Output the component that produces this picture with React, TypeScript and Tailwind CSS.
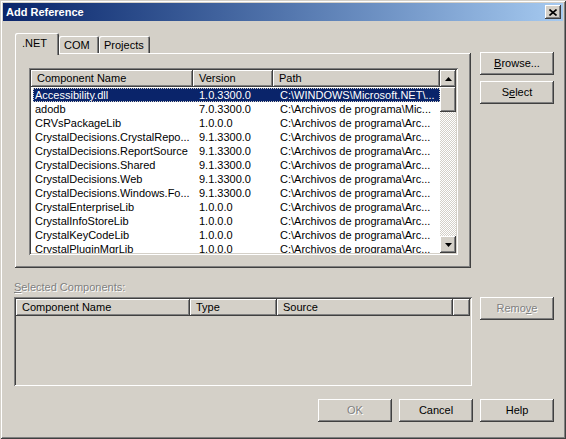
import React from 'react'

const raised = 'shadow-[inset_-1px_-1px_#404040,inset_1px_1px_#ffffff,inset_-2px_-2px_#808080]'
const sunken = 'shadow-[inset_1px_1px_#808080,inset_-1px_-1px_#ffffff,inset_2px_2px_#404040,inset_-2px_-2px_#d4d0c8]'
const disabledText = 'text-[#808080] [text-shadow:1px_1px_0_#ffffff]'

const refs = [
  ['Accessibility.dll', '1.0.3300.0', 'C:\\WINDOWS\\Microsoft.NET\\...'],
  ['adodb', '7.0.3300.0', 'C:\\Archivos de programa\\Mic...'],
  ['CRVsPackageLib', '1.0.0.0', 'C:\\Archivos de programa\\Arc...'],
  ['CrystalDecisions.CrystalRepo...', '9.1.3300.0', 'C:\\Archivos de programa\\Arc...'],
  ['CrystalDecisions.ReportSource', '9.1.3300.0', 'C:\\Archivos de programa\\Arc...'],
  ['CrystalDecisions.Shared', '9.1.3300.0', 'C:\\Archivos de programa\\Arc...'],
  ['CrystalDecisions.Web', '9.1.3300.0', 'C:\\Archivos de programa\\Arc...'],
  ['CrystalDecisions.Windows.Fo...', '9.1.3300.0', 'C:\\Archivos de programa\\Arc...'],
  ['CrystalEnterpriseLib', '1.0.0.0', 'C:\\Archivos de programa\\Arc...'],
  ['CrystalInfoStoreLib', '1.0.0.0', 'C:\\Archivos de programa\\Arc...'],
  ['CrystalKeyCodeLib', '1.0.0.0', 'C:\\Archivos de programa\\Arc...'],
  ['CrystalPluginMgrLib', '1.0.0.0', 'C:\\Archivos de programa\\Arc...'],
]

function Button({ children, disabled, className = '' }: { children: React.ReactNode; disabled?: boolean; className?: string }) {
  return (
    <div className={`w-[74px] h-[23px] flex items-center justify-center bg-[#d4d0c8] ${raised} ${disabled ? disabledText : ''} ${className}`}>
      {children}
    </div>
  )
}

function HeaderCell({ label, w }: { label: string; w: string }) {
  return (
    <div className={`${w} h-[17px] shrink-0 flex items-center pl-[6px] bg-[#d4d0c8] ${raised} whitespace-nowrap overflow-hidden`}>
      {label}
    </div>
  )
}

function Arrow({ up }: { up?: boolean }) {
  return (
    <div className={`w-[16px] h-[17px] flex items-center justify-center bg-[#d4d0c8] ${raised}`}>
      <svg width="7" height="4" viewBox="0 0 7 4">
        {up ? <path d="M3.5 0 L7 4 L0 4 Z" fill="#000" /> : <path d="M0 0 L7 0 L3.5 4 Z" fill="#000" />}
      </svg>
    </div>
  )
}

export default function App() {
  return (
    <div className="w-[566px] h-[439px] bg-[#d4d0c8] p-[3px] flex flex-col shadow-[inset_1px_1px_#d4d0c8,inset_-1px_-1px_#404040,inset_2px_2px_#ffffff,inset_-2px_-2px_#808080] font-['Liberation_Sans',Arial,sans-serif] text-[11px] leading-[13px] text-black select-none">
      {/* title bar */}
      <div className="h-[18px] flex items-center justify-between pl-[3px] pr-[2px] bg-gradient-to-r from-[#0a246a] to-[#a6caf0]">
        <span className="text-white font-bold">Add Reference</span>
        <div className={`w-[16px] h-[14px] flex items-center justify-center bg-[#d4d0c8] ${raised}`}>
          <svg width="8" height="7" viewBox="0 0 8 7">
            <path d="M0.5 0.5 L7.5 6.5 M7.5 0.5 L0.5 6.5" stroke="#000" strokeWidth="1.6" />
          </svg>
        </div>
      </div>

      <div className="flex mt-[12px] pl-[12px]">
        <div className="w-[456px] flex flex-col">
          {/* tabs */}
          <div className="h-[20px] flex items-end">
            <div className="relative z-10 w-[44px] h-[22px] -mb-[2px] pl-[7px] pt-[4px] bg-[#d4d0c8] rounded-t-[2px] shadow-[inset_1px_1px_#ffffff,inset_-1px_0_#404040,inset_-2px_0_#808080]">
              .NET
            </div>
            <div className="w-[40px] h-[17px] pl-[5px] pt-[3px] bg-[#d4d0c8] rounded-t-[2px] shadow-[inset_1px_1px_#ffffff,inset_-1px_0_#404040,inset_-2px_0_#808080]">
              COM
            </div>
            <div className="w-[51px] h-[17px] pl-[5px] pt-[3px] bg-[#d4d0c8] rounded-t-[2px] shadow-[inset_1px_1px_#ffffff,inset_-1px_0_#404040,inset_-2px_0_#808080]">
              Projects
            </div>
          </div>
          {/* tab page */}
          <div className={`h-[215px] pt-[15px] pl-[14px] bg-[#d4d0c8] ${raised}`}>
            <div className={`w-[429px] h-[187px] p-[2px] bg-white ${sunken}`}>
              <div className="flex h-full">
                <div className="w-[409px] flex flex-col overflow-hidden">
                  <div className="flex">
                    <HeaderCell label="Component Name" w="w-[162px]" />
                    <HeaderCell label="Version" w="w-[80px]" />
                    <HeaderCell label="Path" w="w-[167px]" />
                  </div>
                  {refs.map(([name, ver, path], i) => (
                    <div key={name} className="h-[14px] shrink-0 flex pl-[2px] pt-[1px]">
                      <div
                        className={`flex items-center w-full h-[14px] leading-[12px] ${i === 0 ? 'bg-[#0a246a] text-white border border-dotted border-[#d4d0c8]' : 'border border-transparent'}`}
                      >
                        <div className="w-[159px] shrink-0 pl-[1px] whitespace-nowrap overflow-hidden">{name}</div>
                        <div className="w-[80px] shrink-0 pl-[6px] whitespace-nowrap overflow-hidden">{ver}</div>
                        <div className="w-[166px] shrink-0 pl-[7px] whitespace-nowrap overflow-hidden">{path}</div>
                      </div>
                    </div>
                  ))}
                </div>
                {/* scrollbar */}
                <div className="w-[16px] flex flex-col">
                  <Arrow up />
                  <div className={`h-[25px] bg-[#d4d0c8] ${raised}`} />
                  <div className="flex-1 bg-[image:repeating-conic-gradient(#d4d0c8_0_25%,#ffffff_0_50%)] bg-[length:2px_2px]" />
                  <Arrow />
                </div>
              </div>
            </div>
          </div>
        </div>

        <div className="ml-[9px] mt-[19px] flex flex-col gap-[6px]">
          <Button>
            <span><span className="underline underline-offset-[1px]">B</span>rowse...</span>
          </Button>
          <Button>
            <span>S<span className="underline underline-offset-[1px]">e</span>lect</span>
          </Button>
        </div>
      </div>

      <div className={`mt-[13px] ml-[11px] h-[13px] ${disabledText}`}>
        <span className="underline underline-offset-[1px]">S</span>elected Components:
      </div>

      <div className="flex mt-[3px] ml-[11px]">
        <div className={`w-[458px] h-[89px] p-[2px] bg-[#d4d0c8] ${sunken}`}>
          <div className="flex">
            <HeaderCell label="Component Name" w="w-[174px]" />
            <HeaderCell label="Type" w="w-[87px]" />
            <HeaderCell label="Source" w="w-[176px]" />
            <HeaderCell label="" w="w-[17px]" />
          </div>
        </div>
        <Button disabled className="ml-[8px]">
          <span>Remo<span className="underline underline-offset-[1px]">v</span>e</span>
        </Button>
      </div>

      <div className="flex justify-end gap-[7px] mt-[13px] pr-[9px]">
        <Button disabled>OK</Button>
        <Button>Cancel</Button>
        <Button>Help</Button>
      </div>
    </div>
  )
}
